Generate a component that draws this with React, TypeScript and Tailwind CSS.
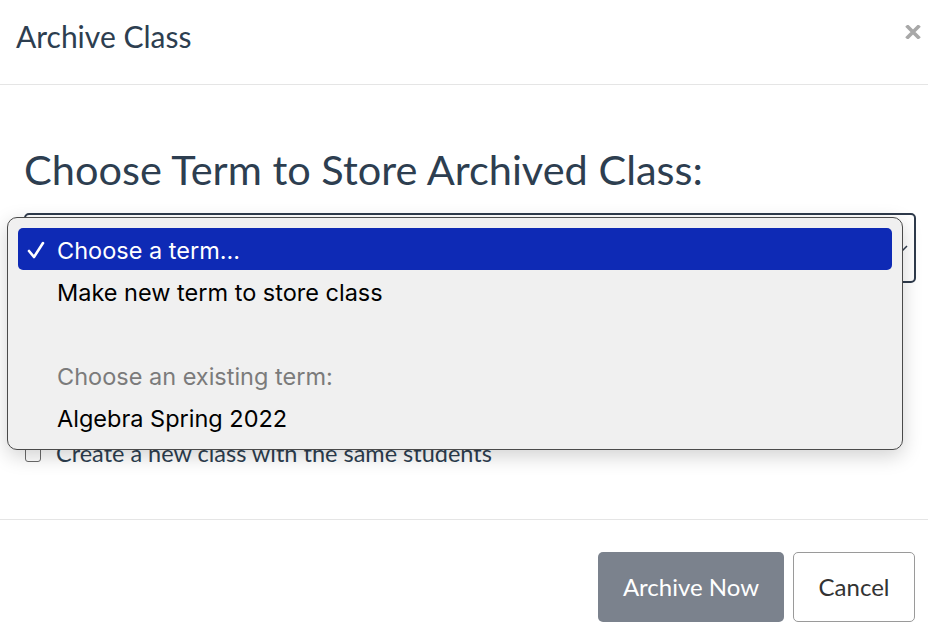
import React from 'react'

const terms = [
    { label: 'Choose a term...', selected: true },
    { label: 'Make new term to store class' },
    { label: '' },
    { label: 'Choose an existing term:', group: true },
    { label: 'Algebra Spring 2022' },
]

const App = () => {
    return (
        <div className="relative w-[928px] h-[634px] overflow-hidden bg-white font-['Lato','Liberation_Sans',sans-serif] text-[#2d3e50]">
            {/* Header */}
            <div className="h-[85px] border-b border-[#e5e5e5] pl-4 pr-[7px] pt-[18px] flex justify-between">
                <h1 className="text-[30px] leading-[1.2]">Archive Class</h1>
                <button className="h-[14px] w-[16px] mt-[7px]">
                    <svg viewBox="0 0 16 14" className="w-[16px] h-[14px]">
                        <path d="M1.5 0.5 L14.5 13.5 M14.5 0.5 L1.5 13.5" stroke="#a8a8a8" strokeWidth="3.6" strokeLinecap="butt" />
                    </svg>
                </button>
            </div>

            {/* Body */}
            <div className="h-[434px] pl-6 pr-3 pt-[60px]">
                <h2 className="text-[41.5px] leading-[1.2]">Choose Term to Store Archived Class:</h2>
                <div className="mt-[18px] h-[70px] border-2 border-[#2f3b4c] rounded-[5px] flex items-center justify-end pr-[6px]">
                    <svg viewBox="0 0 10 6" className="w-[10px] h-[6px]">
                        <path d="M1 1 L5 5 L9 1" fill="none" stroke="#2f3b4c" strokeWidth="1.5" />
                    </svg>
                </div>
                <label className="mt-[156px] flex items-center gap-[15px] text-[23.5px] leading-[1.2]">
                    <span className="w-[16px] h-[16px] mt-[3px] ml-px border border-[#6b6b6b] rounded-[3px] bg-white"></span>
                    Create a new class with the same students
                </label>
            </div>

            {/* Footer */}
            <div className="border-t border-[#e5e5e5] flex justify-end gap-[9px] pt-[32px] pr-[13px]">
                <button className="w-[186px] h-[70px] rounded-[5px] bg-[#7b828d] text-white text-[24px]">
                    Archive Now
                </button>
                <button className="w-[122px] h-[70px] rounded-[5px] border border-[#9a9a9a] bg-white text-[#333] text-[24px]">
                    Cancel
                </button>
            </div>

            {/* Open select menu */}
            <div className="absolute left-[7px] top-[217px] w-[896px] h-[233px] bg-[#f0f0f0] border-[1.5px] border-[#4a4a4a] rounded-[10px] shadow-[0_6px_20px_rgba(0,0,0,0.18)] p-[10px] font-['Inter','Noto_Sans',sans-serif] text-[23.5px]">
                {terms.map((t, i) => (
                    <div
                        key={i}
                        className={
                            t.selected
                                ? 'relative h-[42px] rounded-[5px] bg-[#0e2ab5] text-white flex items-center pt-[3px] pl-[39px]'
                                : t.group
                                ? 'h-[42px] flex items-center pt-[3px] pl-[39px] text-[#7b7b7b]'
                                : 'h-[42px] flex items-center pt-[3px] pl-[39px] text-black'
                        }
                    >
                        {t.selected && (
                            <svg viewBox="0 0 18 18" className="absolute left-[9px] top-[13px] w-[18px] h-[18px]">
                                <path d="M2 10 L7 16 L16 2" fill="none" stroke="white" strokeWidth="2.6" strokeLinecap="round" strokeLinejoin="round" />
                            </svg>
                        )}
                        {t.label}
                    </div>
                ))}
            </div>
        </div>
    )
}

export default App
